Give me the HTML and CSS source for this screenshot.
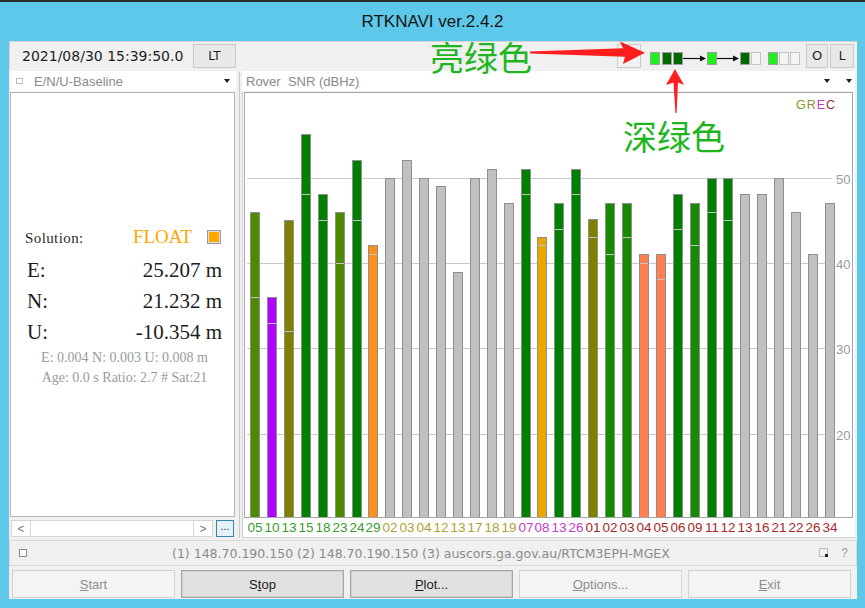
FILE: index.html
```html
<!DOCTYPE html>
<html>
<head>
<meta charset="utf-8">
<title>RTKNAVI</title>
<link rel="stylesheet" href="styles.css">
</head>
<body>
<div class="title">RTKNAVI ver.2.4.2</div>
<div class="win">
  <div class="toolbar">
    <div class="timebox">2021/08/30 15:39:50.0</div>
    <div class="tbtn lt">LT</div>
    <div class="spacer"></div>
    <div class="tbtn blank"></div>
    <svg class="ind" width="158" height="28" viewBox="0 0 158 28">
      <rect x="5.5" y="10.5" width="9" height="12" fill="#1ef01e" stroke="#a0a0a0"/>
      <rect x="17.5" y="10.5" width="9" height="12" fill="#006a00" stroke="#a0a0a0"/>
      <rect x="28.5" y="10.5" width="9" height="12" fill="#006a00" stroke="#a0a0a0"/>
      <line x1="38" y1="16.5" x2="56" y2="16.5" stroke="#111" stroke-width="1.2"/>
      <polygon points="55,13.5 61,16.5 55,19.5" fill="#111"/>
      <rect x="62.5" y="10.5" width="9" height="12" fill="#1ef01e" stroke="#a0a0a0"/>
      <line x1="72" y1="16.5" x2="89" y2="16.5" stroke="#111" stroke-width="1.2"/>
      <polygon points="88,13.5 94,16.5 88,19.5" fill="#111"/>
      <rect x="95.5" y="10.5" width="9" height="12" fill="#006a00" stroke="#a0a0a0"/>
      <rect x="106.5" y="10.5" width="9" height="12" fill="#f4f4f4" stroke="#c4c4c4"/>
      <rect x="123.5" y="10.5" width="9" height="12" fill="#1ef01e" stroke="#a0a0a0"/>
      <rect x="134.5" y="10.5" width="9" height="12" fill="#f4f4f4" stroke="#c4c4c4"/>
      <rect x="145.5" y="10.5" width="9" height="12" fill="#f4f4f4" stroke="#c4c4c4"/>
    </svg>
    <div class="tbtn o">O</div>
    <div class="tbtn l">L</div>
  </div>

  <div class="main">
    <div class="left">
      <div class="phead lhead">
        <svg class="hicon" width="7" height="6" viewBox="0 0 7 6"><rect x="0.5" y="0.5" width="6" height="5" fill="none" stroke="#777" stroke-dasharray="1 1"/></svg>
        <span class="htext">E/N/U-Baseline</span>
        <span class="grow"></span>
        <span class="tri"></span>
      </div>
      <div class="solbox">
        <div class="solrow"><span class="sl">Solution:</span><span class="fl">FLOAT</span><span class="fsq"></span></div>
        <div class="row first"><span class="k">E:</span><span>25.207 m</span></div>
        <div class="row"><span class="k">N:</span><span>21.232 m</span></div>
        <div class="row"><span class="k">U:</span><span>-10.354 m</span></div>
        <div class="small">E: 0.004 N: 0.003 U: 0.008 m</div>
        <div class="small">Age: 0.0 s Ratio: 2.7 # Sat:21</div>
      </div>
      <div class="scrollrow">
        <div class="sb arrow">&lt;</div>
        <div class="sb track"></div>
        <div class="sb arrow">&gt;</div>
        <div class="dots">...</div>
      </div>
    </div>
    <div class="split"></div>
    <div class="right">
      <div class="phead rhead">
        <span class="htext">Rover&nbsp; SNR (dBHz)</span>
        <span class="grow"></span>
        <span class="tri"></span>
        <span class="tri tri2"></span>
      </div>
      <svg class="chart" width="613" height="446" viewBox="0 0 613 446">
        <rect x="0" y="0" width="613" height="446" fill="#fff"/>
        <line x1="0.5" y1="0" x2="0.5" y2="446" stroke="#cfcfcf"/>
        <line x1="0" y1="445.5" x2="613" y2="445.5" stroke="#cfcfcf"/>
        <g stroke="#cacaca">
          <line x1="5" y1="86.5" x2="590" y2="86.5"/>
          <line x1="5" y1="171.5" x2="590" y2="171.5"/>
          <line x1="5" y1="256.5" x2="590" y2="256.5"/>
          <line x1="5" y1="342.5" x2="590" y2="342.5"/>
        </g>
        <g class="ylab" fill="#9a9a9a">
          <text x="594" y="92">50</text>
          <text x="594" y="177">40</text>
          <text x="594" y="262">30</text>
          <text x="594" y="348">20</text>
        </g>
        <text class="grec" x="554" y="17"><tspan fill="#7f9a2c">G</tspan><tspan fill="#9a8a3a" dx="1">R</tspan><tspan fill="#c03cc0" dx="1">E</tspan><tspan fill="#a23040" dx="1">C</tspan></text>
        <g stroke="#8f8f8f">
          <rect x="8.5" y="120.5" width="9" height="305" fill="#4e8a00"/>
          <rect x="25.5" y="205.5" width="9" height="220" fill="#b000ff"/>
          <rect x="42.5" y="128.5" width="9" height="297" fill="#808000"/>
          <rect x="59.5" y="42.5" width="9" height="383" fill="#008000"/>
          <rect x="76.5" y="102.5" width="9" height="323" fill="#008000"/>
          <rect x="93.5" y="120.5" width="9" height="305" fill="#4e8a00"/>
          <rect x="110.5" y="68.5" width="9" height="357" fill="#008000"/>
          <rect x="126.5" y="153.5" width="9" height="272" fill="#ff9020"/>
          <rect x="143.5" y="86.5" width="9" height="339" fill="#c0c0c0"/>
          <rect x="160.5" y="68.5" width="9" height="357" fill="#c0c0c0"/>
          <rect x="177.5" y="86.5" width="9" height="339" fill="#c0c0c0"/>
          <rect x="194.5" y="94.5" width="9" height="331" fill="#c0c0c0"/>
          <rect x="211.5" y="180.5" width="9" height="245" fill="#c0c0c0"/>
          <rect x="228.5" y="86.5" width="9" height="339" fill="#c0c0c0"/>
          <rect x="245.5" y="77.5" width="9" height="348" fill="#c0c0c0"/>
          <rect x="262.5" y="111.5" width="9" height="314" fill="#c0c0c0"/>
          <rect x="279.5" y="77.5" width="9" height="348" fill="#008000"/>
          <rect x="295.5" y="145.5" width="9" height="280" fill="#e8a800"/>
          <rect x="312.5" y="111.5" width="9" height="314" fill="#008000"/>
          <rect x="329.5" y="77.5" width="9" height="348" fill="#008000"/>
          <rect x="346.5" y="127.5" width="9" height="298" fill="#808000"/>
          <rect x="363.5" y="111.5" width="9" height="314" fill="#168a00"/>
          <rect x="380.5" y="111.5" width="9" height="314" fill="#168a00"/>
          <rect x="397.5" y="162.5" width="9" height="263" fill="#ff7f50"/>
          <rect x="414.5" y="162.5" width="9" height="263" fill="#ff7f50"/>
          <rect x="431.5" y="102.5" width="9" height="323" fill="#008000"/>
          <rect x="448.5" y="111.5" width="9" height="314" fill="#168a00"/>
          <rect x="465.5" y="86.5" width="9" height="339" fill="#008000"/>
          <rect x="481.5" y="86.5" width="9" height="339" fill="#008000"/>
          <rect x="498.5" y="102.5" width="9" height="323" fill="#c0c0c0"/>
          <rect x="515.5" y="102.5" width="9" height="323" fill="#c0c0c0"/>
          <rect x="532.5" y="86.5" width="9" height="339" fill="#c0c0c0"/>
          <rect x="549.5" y="120.5" width="9" height="305" fill="#c0c0c0"/>
          <rect x="566.5" y="162.5" width="9" height="263" fill="#c0c0c0"/>
          <rect x="583.5" y="111.5" width="9" height="314" fill="#c0c0c0"/>
        </g>
        <g stroke="#c4c4c4">
          <line x1="9" y1="205.5" x2="17" y2="205.5"/>
          <line x1="26" y1="231.5" x2="34" y2="231.5"/>
          <line x1="43" y1="239.5" x2="51" y2="239.5"/>
          <line x1="60" y1="102.5" x2="68" y2="102.5"/>
          <line x1="77" y1="128.5" x2="85" y2="128.5"/>
          <line x1="94" y1="171.5" x2="102" y2="171.5"/>
          <line x1="111" y1="128.5" x2="119" y2="128.5"/>
          <line x1="127" y1="162.5" x2="135" y2="162.5"/>
          <line x1="280" y1="102.5" x2="288" y2="102.5"/>
          <line x1="296" y1="153.5" x2="304" y2="153.5"/>
          <line x1="313" y1="137.5" x2="321" y2="137.5"/>
          <line x1="330" y1="102.5" x2="338" y2="102.5"/>
          <line x1="347" y1="145.5" x2="355" y2="145.5"/>
          <line x1="364" y1="162.5" x2="372" y2="162.5"/>
          <line x1="381" y1="145.5" x2="389" y2="145.5"/>
          <line x1="398" y1="171.5" x2="406" y2="171.5"/>
          <line x1="415" y1="187.5" x2="423" y2="187.5"/>
          <line x1="432" y1="137.5" x2="440" y2="137.5"/>
          <line x1="449" y1="153.5" x2="457" y2="153.5"/>
          <line x1="466" y1="120.5" x2="474" y2="120.5"/>
          <line x1="482" y1="128.5" x2="490" y2="128.5"/>
        </g>
        <rect x="2.5" y="0.5" width="608" height="425" fill="none" stroke="#a6a6a6"/>
        <g class="xlab" text-anchor="middle">
          <g fill="#3a9a30">
            <text x="13" y="440">05</text><text x="30" y="440">10</text><text x="47" y="440">13</text><text x="64" y="440">15</text>
            <text x="81" y="440">18</text><text x="98" y="440">23</text><text x="115" y="440">24</text><text x="131" y="440">29</text>
          </g>
          <g fill="#b0a232">
            <text x="148" y="440">02</text><text x="165" y="440">03</text><text x="182" y="440">04</text><text x="199" y="440">12</text>
            <text x="216" y="440">13</text><text x="233" y="440">17</text><text x="250" y="440">18</text><text x="267" y="440">19</text>
          </g>
          <g fill="#c83cc8">
            <text x="284" y="440">07</text><text x="300" y="440">08</text><text x="317" y="440">13</text><text x="334" y="440">26</text>
          </g>
          <g fill="#a42a2a">
            <text x="351" y="440">01</text><text x="368" y="440">02</text><text x="385" y="440">03</text><text x="402" y="440">04</text>
            <text x="419" y="440">05</text><text x="436" y="440">06</text><text x="453" y="440">09</text><text x="470" y="440">11</text>
            <text x="486" y="440">12</text><text x="503" y="440">13</text><text x="520" y="440">16</text><text x="537" y="440">21</text>
            <text x="554" y="440">22</text><text x="571" y="440">26</text><text x="588" y="440">34</text>
          </g>
        </g>
      </svg>
    </div>
  </div>

  <div class="status">
    <span class="sicon"></span>
    <span class="stext">(1) 148.70.190.150 (2) 148.70.190.150 (3) auscors.ga.gov.au/RTCM3EPH-MGEX</span>
    <span class="grow"></span>
    <svg class="grip" width="10" height="10" viewBox="0 0 10 10"><rect x="0.5" y="0.5" width="8" height="8" fill="none" stroke="#888" stroke-dasharray="1 1"/><rect x="6" y="6" width="3" height="3" fill="#222"/></svg>
    <span class="qm">?</span>
  </div>

  <div class="buttons">
    <div class="b"><span><u>S</u>tart</span></div>
    <div class="b act"><span>S<u>t</u>op</span></div>
    <div class="b act"><span><u>P</u>lot...</span></div>
    <div class="b"><span><u>O</u>ptions...</span></div>
    <div class="b"><span><u>E</u>xit</span></div>
  </div>
</div>

<div class="anno a1">亮绿色</div>
<div class="anno a2">深绿色</div>
<svg class="arrows" width="865" height="608" viewBox="0 0 865 608">
  <polygon points="530,51.4 623,48.2 620,41.5 645,52.8 623,64 625,56.8 530,53.4" fill="#ff1e1e"/>
  <polygon points="675,69 684,85 678,82.5 676.6,113 675.4,113 673.5,82.5 666,85" fill="#ff1e1e"/>
</svg>
</body>
</html>
```

FILE: styles.css
```css
* { box-sizing: border-box; }

body {
  margin: 0;
  width: 865px;
  height: 608px;
  overflow: hidden;
  position: relative;
  background: #5ec8ea;
  font-family: "Liberation Sans", Arial, sans-serif;
}

.title {
  height: 41px;
  border-top: 2px solid #2b2b2b;
  display: flex;
  align-items: center;
  justify-content: center;
  font-size: 17px;
  color: #141414;
  padding-top: 1px;
}

.win {
  margin-left: 9px;
  width: 848px;
  height: 558px;
  background: #f0f0f0;
  display: flex;
  flex-direction: column;
}

/* toolbar */
.toolbar {
  height: 28px;
  flex: none;
  display: flex;
  align-items: center;
  border-top: 1px solid #d4d4d4;
}
.timebox {
  width: 183px;
  height: 27px;
  border-left: 1px solid #d4d4d4;
  display: flex;
  align-items: center;
  padding-left: 12px;
  font-family: "DejaVu Sans", sans-serif;
  font-size: 14px;
  color: #1e1e1e;
}
.tbtn {
  height: 24px;
  display: flex;
  align-items: center;
  justify-content: center;
  background: #e8e8e8;
  border: 1px solid #cacaca;
  font-family: "DejaVu Sans", sans-serif;
  font-size: 12px;
  color: #1e1e1e;
}
.lt { width: 43px; margin-left: 1px; }
.spacer, .grow { flex: 1; }
.blank { width: 24px; margin-right: 4px; background: #f2f2f2; }
.ind { display: block; flex: none; }
.o { width: 22px; margin-left: 3px; font-size: 13px; }
.l { width: 24px; margin-left: 2px; margin-right: 3px; }

/* main area */
.main {
  height: 469px;
  flex: none;
  display: flex;
}
.left {
  width: 227px;
  display: flex;
  flex-direction: column;
}
.phead {
  height: 20px;
  margin-top: 2px;
  margin-bottom: 1px;
  background: #fff;
  display: flex;
  align-items: center;
  font-size: 13px;
  color: #8a8a8a;
}
.lhead { margin-left: 1px; padding-left: 6px; padding-right: 6px; }
.hicon { display: block; }
.lhead .htext { margin-left: 11px; }
.tri {
  width: 0;
  height: 0;
  border-left: 3.5px solid transparent;
  border-right: 3.5px solid transparent;
  border-top: 4px solid #1e1e1e;
}
.rhead { padding-left: 4px; padding-right: 3px; margin-right: 2px; }
.rhead .htext { white-space: pre; }
.tri2 { margin-left: 16px; }

.solbox {
  height: 425px;
  margin: 0 1px;
  background: #fff;
  border: 1px solid #b4b4b4;
  padding: 133px 12px 0 14px;
  font-family: "Liberation Serif", "Times New Roman", serif;
  color: #1c1c1c;
}
.solrow {
  display: flex;
  align-items: baseline;
  height: 22px;
  line-height: 22px;
}
.sl { flex: 1; font-size: 15px; letter-spacing: 0.4px; color: #2a2a2a; }
.fl { font-size: 19px; color: #ffa500; }
.fsq {
  width: 14px;
  height: 14px;
  margin-left: 15px;
  margin-right: 1px;
  align-self: center;
  background: #ffa800;
  border: 1px solid #999;
  box-shadow: inset 0 0 0 1px #e0e0e0;
}
.row {
  display: flex;
  justify-content: space-between;
  font-size: 21px;
  line-height: 31px;
  height: 31px;
}
.row.first { margin-top: 7px; }
.row .k { padding-left: 2px; }
.small {
  font-size: 14px;
  line-height: 20px;
  text-align: center;
  color: #9a9a9a;
  margin-right: -2px;
}

.scrollrow {
  height: 21px;
  padding-top: 3px;
  display: flex;
}
.sb {
  height: 17px;
  background: #fff;
  border: 1px solid #d6d6d6;
  display: flex;
  align-items: center;
  justify-content: center;
  font-size: 12px;
  color: #777;
}
.arrow { width: 20px; }
.sb:first-child { margin-left: 2px; }
.track { width: 162px; border-left: none; border-right: none; }
.dots {
  width: 18px;
  height: 17px;
  margin-left: 3px;
  background: #e5f1fb;
  border: 1px solid #3c7fb1;
  font-size: 11px;
  line-height: 11px;
  text-align: center;
  color: #222;
}

.split {
  width: 6px;
  display: flex;
  justify-content: center;
  padding-top: 3px;
}
.split::before {
  content: "";
  width: 1px;
  background: #c8c8c8;
}

.right {
  width: 615px;
  display: flex;
  flex-direction: column;
}
.chart { display: block; }
.chart text { font-family: "Liberation Sans", Arial, sans-serif; }
.ylab { font-size: 13px; }
.grec { font-size: 12.5px; }
.xlab { font-size: 13.5px; }

/* status bar */
.status {
  height: 26px;
  margin-top: 2px;
  flex: none;
  border: 1px solid #dadada;
  display: flex;
  align-items: center;
  padding-left: 9px;
  padding-right: 8px;
}
.sicon {
  width: 8px;
  height: 8px;
  border: 1px solid #8a8a8a;
  background: #fafafa;
}
.stext {
  margin-left: 145px;
  font-family: "DejaVu Sans", sans-serif;
  font-size: 12.5px;
  color: #8a8a8a;
}
.grip { display: block; }
.qm {
  margin-left: 12px;
  font-size: 12px;
  color: #9a9a9a;
}

/* buttons */
.buttons {
  height: 28px;
  margin-top: 4px;
  flex: none;
  display: grid;
  grid-template-columns: repeat(5, 163px);
  column-gap: 6px;
  padding-left: 3px;
}
.b {
  border: 1px solid #d2d2d2;
  background: #f4f4f4;
  display: flex;
  align-items: center;
  justify-content: center;
  font-size: 13px;
  color: #8e8e8e;
}
.b.act {
  background: #e1e1e1;
  border: 1px solid #a6a6a6;
  box-shadow: inset 0 0 0 1px #cfcfcf;
  color: #1c1c1c;
}

/* annotations */
.anno {
  position: absolute;
  font-family: "Noto Sans CJK SC", "Noto Sans", sans-serif;
  font-size: 34px;
  line-height: 34px;
  color: #1fb51f;
  white-space: nowrap;
}
.a1 { left: 430px; top: 40px; }
.a2 { left: 623px; top: 119px; }
.arrows {
  position: absolute;
  left: 0;
  top: 0;
  pointer-events: none;
}
```
